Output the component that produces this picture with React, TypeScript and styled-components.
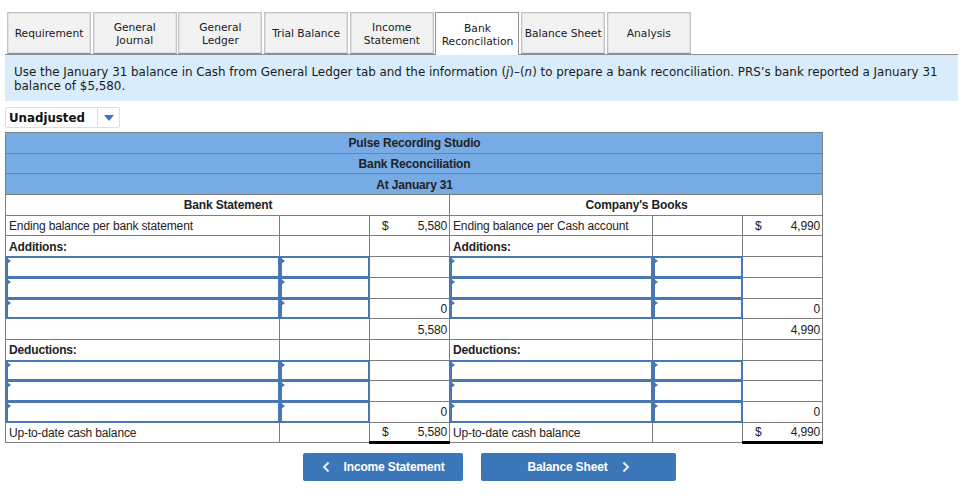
import React from "react";
import styled, { createGlobalStyle, css } from "styled-components";

const Global = createGlobalStyle`
  html, body { margin: 0; padding: 0; background: #fff; }
  body { font-family: "Liberation Sans", Arial, sans-serif; color: #222; }
`;

const Page = styled.div`
  width: 966px;
  height: 496px;
  box-sizing: border-box;
  padding: 12px 8px 0 5px;
  overflow: hidden;
`;

const TabBar = styled.div`
  display: flex;
  gap: 1.7px;
  height: 43px;
  box-sizing: border-box;
  padding-left: 2px;
  border-bottom: 1px solid #919191;
`;

const Tab = styled.div<{ $active?: boolean }>`
  width: 84px;
  height: ${(p) => (p.$active ? 43 : 42)}px;
  box-sizing: border-box;
  padding-top: 1px;
  display: flex;
  align-items: center;
  justify-content: center;
  text-align: center;
  font-family: "DejaVu Sans", Verdana, sans-serif;
  font-size: 10.7px;
  line-height: 13px;
  color: #1a1a1a;
  white-space: pre-line;
  background: ${(p) => (p.$active ? "#fff" : "#f2f2f2")};
  border: 1px solid ${(p) => (p.$active ? "#919191" : "#c4c4c4")};
  ${(p) => (p.$active ? "border-bottom: none;" : "border-bottom-color: #919191;")}
  box-shadow: ${(p) => (p.$active ? "none" : "inset 0 0 0 0.5px #d0d0d0")};
`;

const Instructions = styled.div`
  height: 46px;
  box-sizing: border-box;
  padding: 10px 9px 0;
  background: #d9ecfb;
  font-family: "DejaVu Sans", Verdana, sans-serif;
  font-size: 11.9px;
  line-height: 14px;
  color: #1a1a1a;
`;

const SelectBox = styled.div`
  margin-top: 6px;
  width: 115px;
  height: 21px;
  box-sizing: border-box;
  display: flex;
  border: 1px solid #dedede;
  border-radius: 2px;
`;

const SelectLabel = styled.div`
  width: 92px;
  box-sizing: border-box;
  padding-left: 3px;
  font-family: "DejaVu Sans", Verdana, sans-serif;
  font-size: 11.8px;
  font-weight: 700;
  line-height: 20px;
  color: #111;
  border-right: 1px solid #dedede;
`;

const SelectArrow = styled.div`
  flex: 1;
  display: flex;
  align-items: center;
  justify-content: center;
  &::after {
    content: "";
    border-left: 5px solid transparent;
    border-right: 5px solid transparent;
    border-top: 6px solid #3f74b8;
  }
`;

const Sheet = styled.table`
  margin-top: 4px;
  width: 818px;
  table-layout: fixed;
  border-collapse: collapse;
  font-size: 12px;
  letter-spacing: -0.15px;
  color: #222;
`;

const Row = styled.tr`
  height: 20.7px;
`;

const baseCell = css`
  box-sizing: border-box;
  padding: 1px 2px 0 3px;
  border: 1px solid #7f7f7f;
  line-height: 14px;
  white-space: nowrap;
`;

const TitleCell = styled.td`
  ${baseCell}
  text-align: center;
  font-weight: 700;
  background: #76abe6;
`;

const SideHeader = styled.td`
  ${baseCell}
  text-align: center;
  font-weight: 700;
`;

const Cell = styled.td<{ $bold?: boolean }>`
  ${baseCell}
  font-weight: ${(p) => (p.$bold ? 700 : 400)};
`;

const AmountCell = styled.td<{ $total?: boolean; $grand?: boolean }>`
  ${baseCell}
  text-align: right;
  ${(p) => (p.$total || p.$grand) && "border-top: 1px solid #000;"}
  ${(p) => p.$grand && "border-bottom: 3px solid #000;"}
`;

const Money = styled.div`
  display: flex;
  justify-content: space-between;
  padding-left: 9px;
`;

const InputCell = styled.td`
  ${baseCell}
  position: relative;
  &::after {
    content: "";
    position: absolute;
    inset: -1px;
    border: 2px solid #4878b4;
    border-left-width: 3px;
    pointer-events: none;
  }
  &::before {
    content: "";
    position: absolute;
    top: 1px;
    left: 1px;
    z-index: 1;
    border-top: 3px solid transparent;
    border-bottom: 3px solid transparent;
    border-left: 4px solid #4878b4;
  }
`;

const NavRow = styled.div`
  display: flex;
  gap: 18px;
  margin: 9px 0 0 298px;
`;

const NavButton = styled.div<{ $w: number; $gap: number }>`
  width: ${(p) => p.$w}px;
  height: 28px;
  box-sizing: border-box;
  padding-bottom: 1px;
  display: flex;
  align-items: center;
  justify-content: center;
  gap: ${(p) => p.$gap}px;
  background: #3b76b9;
  border-radius: 2px;
  color: #fff;
  font-size: 12px;
  letter-spacing: -0.15px;
  font-weight: 700;
`;

const Chevron = ({ right }: { right?: boolean }) => (
  <svg width="8" height="12" viewBox="0 0 8 12" fill="none">
    <path
      d={right ? "M1.5 1.5 L6 6 L1.5 10.5" : "M6.5 1.5 L2 6 L6.5 10.5"}
      stroke="#e8eff8"
      strokeWidth="2"
    />
  </svg>
);

const tabs = [
  "Requirement",
  "General\nJournal",
  "General\nLedger",
  "Trial Balance",
  "Income\nStatement",
  "Bank\nReconcilation",
  "Balance Sheet",
  "Analysis",
];

const InputRow = ({ left, right }: { left?: string; right?: string }) => (
  <Row>
    <InputCell />
    <InputCell />
    <AmountCell>{left}</AmountCell>
    <InputCell />
    <InputCell />
    <AmountCell>{right}</AmountCell>
  </Row>
);

const MoneyValue = ({ v }: { v: string }) => (
  <Money>
    <span>$</span>
    <span>{v}</span>
  </Money>
);

export default function App() {
  return (
    <Page>
      <Global />
      <TabBar>
        {tabs.map((t) => (
          <Tab key={t} $active={t.startsWith("Bank")}>
            {t}
          </Tab>
        ))}
      </TabBar>
      <Instructions>
        Use the January 31 balance in Cash from General Ledger tab and the information (<i>j</i>)–(<i>n</i>) to prepare a bank reconciliation. PRS’s bank reported a January 31
        <br />
        balance of $5,580.
      </Instructions>
      <SelectBox>
        <SelectLabel>Unadjusted</SelectLabel>
        <SelectArrow />
      </SelectBox>
      <Sheet>
        <colgroup>
          <col style={{ width: 274 }} />
          <col style={{ width: 90 }} />
          <col style={{ width: 80 }} />
          <col style={{ width: 203 }} />
          <col style={{ width: 90 }} />
          <col style={{ width: 80 }} />
        </colgroup>
        <tbody>
          <Row><TitleCell colSpan={6}>Pulse Recording Studio</TitleCell></Row>
          <Row><TitleCell colSpan={6}>Bank Reconciliation</TitleCell></Row>
          <Row><TitleCell colSpan={6}>At January 31</TitleCell></Row>
          <Row>
            <SideHeader colSpan={3}>Bank Statement</SideHeader>
            <SideHeader colSpan={3}>Company's Books</SideHeader>
          </Row>
          <Row>
            <Cell>Ending balance per bank statement</Cell>
            <Cell />
            <AmountCell><MoneyValue v="5,580" /></AmountCell>
            <Cell>Ending balance per Cash account</Cell>
            <Cell />
            <AmountCell><MoneyValue v="4,990" /></AmountCell>
          </Row>
          <Row>
            <Cell $bold>Additions:</Cell>
            <Cell />
            <Cell />
            <Cell $bold>Additions:</Cell>
            <Cell />
            <Cell />
          </Row>
          <InputRow />
          <InputRow />
          <InputRow left="0" right="0" />
          <Row>
            <Cell />
            <Cell />
            <AmountCell $total>5,580</AmountCell>
            <Cell />
            <Cell />
            <AmountCell $total>4,990</AmountCell>
          </Row>
          <Row>
            <Cell $bold>Deductions:</Cell>
            <Cell />
            <Cell />
            <Cell $bold>Deductions:</Cell>
            <Cell />
            <Cell />
          </Row>
          <InputRow />
          <InputRow />
          <InputRow left="0" right="0" />
          <Row>
            <Cell>Up-to-date cash balance</Cell>
            <Cell />
            <AmountCell $grand><MoneyValue v="5,580" /></AmountCell>
            <Cell>Up-to-date cash balance</Cell>
            <Cell />
            <AmountCell $grand><MoneyValue v="4,990" /></AmountCell>
          </Row>
        </tbody>
      </Sheet>
      <NavRow>
        <NavButton $w={160} $gap={14}>
          <Chevron />
          <span>Income Statement</span>
        </NavButton>
        <NavButton $w={195} $gap={14}>
          <span>Balance Sheet</span>
          <Chevron right />
        </NavButton>
      </NavRow>
    </Page>
  );
}
